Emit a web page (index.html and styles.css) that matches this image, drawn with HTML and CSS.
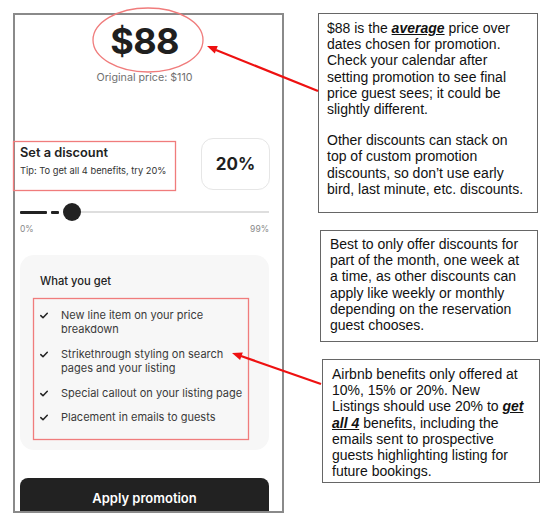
FILE: index.html
```html
<!DOCTYPE html>
<html lang="en">
<head>
<meta charset="utf-8">
<title>Promotion pricing notes</title>
<link rel="stylesheet" href="styles.css">
</head>
<body>
<div class="page">
  <div class="phone">
    <div class="price-block">
      <div class="price">$88</div>
      <div class="orig">Original price: $110</div>
    </div>
    <div class="discount-row">
      <div class="discount-text">
        <div class="discount-title">Set a discount</div>
        <div class="discount-tip">Tip: To get all 4 benefits, try 20%</div>
      </div>
      <div class="pct-box">20%</div>
    </div>
    <div class="slider">
      <span class="seg seg-long"></span>
      <span class="seg seg-short"></span>
      <span class="knob"></span>
      <span class="track"></span>
    </div>
    <div class="slider-labels"><span>0%</span><span>99%</span></div>
    <div class="benefits">
      <div class="benefits-title">What you get</div>
      <ul class="benefit-list">
        <li><svg class="check" viewBox="0 0 8 7"><path d="M0.8 3.6 L3 5.8 L7.3 1.2"/></svg><span>New line item on your price<br>breakdown</span></li>
        <li><svg class="check" viewBox="0 0 8 7"><path d="M0.8 3.6 L3 5.8 L7.3 1.2"/></svg><span>Strikethrough styling on search<br>pages and your listing</span></li>
        <li><svg class="check" viewBox="0 0 8 7"><path d="M0.8 3.6 L3 5.8 L7.3 1.2"/></svg><span>Special callout on your listing page</span></li>
        <li><svg class="check" viewBox="0 0 8 7"><path d="M0.8 3.6 L3 5.8 L7.3 1.2"/></svg><span>Placement in emails to guests</span></li>
      </ul>
    </div>
    <button class="apply">Apply promotion</button>
  </div>

  <div class="notes">
    <div class="note note-1">
      <p>$88 is the <em class="key">average</em> price over<br>dates chosen for promotion.<br>Check your calendar after<br>setting promotion to see final<br>price guest sees; it could be<br>slightly different.</p>
      <p>Other discounts can stack on<br>top of custom promotion<br>discounts, so don’t use early<br>bird, last minute, etc. discounts.</p>
    </div>
    <div class="note note-2">
      <p>Best to only offer discounts for<br>part of the month, one week at<br>a time, as other discounts can<br>apply like weekly or monthly<br>depending on the reservation<br>guest chooses.</p>
    </div>
    <div class="note note-3">
      <p>Airbnb benefits only offered at<br>10%, 15% or 20%. New<br>Listings should use 20% to <em class="key">get<br>all 4</em> benefits, including the<br>emails sent to prospective<br>guests highlighting listing for<br>future bookings.</p>
    </div>
  </div>

  <svg class="annotations" viewBox="0 0 555 518" width="555" height="518">
    <ellipse class="hl" cx="148" cy="40" rx="55" ry="32"/>
    <rect class="hl" x="13.5" y="141.5" width="162" height="49"/>
    <rect class="hl" x="33.5" y="298.5" width="215" height="141"/>
    <line class="arrow" x1="318" y1="91" x2="216" y2="50"/>
    <polygon class="arrow-head" points="207,46 217.8,46.1 214.8,53.5"/>
    <line class="arrow" x1="321" y1="384" x2="241" y2="356"/>
    <polygon class="arrow-head" points="232,353 242.8,352.5 240.1,360.1"/>
  </svg>
</div>
</body>
</html>
```

FILE: styles.css
```css
* {
  box-sizing: border-box;
}

html,
body {
  margin: 0;
  padding: 0;
  background: #ffffff;
}

.page {
  position: relative;
  width: 555px;
  height: 518px;
  padding: 13px 0 0 13px;
  display: flex;
  align-items: flex-start;
  font-family: Inter, "Noto Sans", sans-serif;
  color: #222222;
  overflow: hidden;
}

/* ---------- phone screenshot ---------- */
.phone {
  width: 271px;
  height: 500px;
  border: 2px solid #8a8a8a;
  padding: 6px 13px 0 5px;
  display: flex;
  flex-direction: column;
  overflow: hidden;
  background: #ffffff;
  flex-shrink: 0;
}

.phone > * {
  flex-shrink: 0;
}

.price-block {
  text-align: center;
}

.price {
  font-size: 36px;
  line-height: 40px;
  font-weight: 700;
  letter-spacing: -0.6px;
  color: #1f1f1f;
}

.orig {
  margin-top: 10px;
  font-size: 10.7px;
  line-height: 14px;
  color: #707070;
}

.discount-row {
  margin-top: 53px;
  display: flex;
  justify-content: space-between;
  align-items: flex-start;
}

.discount-text {
  margin-top: 6px;
}

.discount-title {
  font-size: 12.8px;
  line-height: 18px;
  font-weight: 600;
  color: #222222;
}

.discount-tip {
  margin-top: 3px;
  font-size: 9.3px;
  line-height: 12px;
  color: #333333;
}

.pct-box {
  width: 69px;
  height: 52px;
  margin-right: -1px;
  border: 1px solid #e6e6e6;
  border-radius: 12px;
  display: flex;
  align-items: center;
  justify-content: center;
  font-size: 17px;
  font-weight: 700;
  color: #1f1f1f;
}

.slider {
  margin-top: 13px;
  height: 18px;
  display: flex;
  align-items: center;
}

.seg {
  height: 3px;
  background: #222222;
  border-radius: 1px;
}

.seg-long {
  width: 27px;
}

.seg-short {
  width: 8px;
  margin-left: 4px;
}

.knob {
  width: 18px;
  height: 18px;
  margin-left: 4px;
  border-radius: 50%;
  background: #222222;
}

.track {
  flex: 1;
  height: 2px;
  background: #dedede;
}

.slider-labels {
  margin-top: 3px;
  display: flex;
  justify-content: space-between;
  font-size: 8.5px;
  line-height: 11px;
  color: #8a8a8a;
}

.benefits {
  margin-top: 20px;
  background: #f7f7f7;
  border-radius: 14px;
  padding: 19px 12px 25px 20px;
}

.benefits-title {
  font-size: 11.2px;
  line-height: 14px;
  font-weight: 500;
  color: #222222;
}

.benefit-list {
  list-style: none;
  margin: 19.5px 0 0;
  padding: 0;
  display: flex;
  flex-direction: column;
  gap: 10px;
}

.benefit-list li {
  display: flex;
  align-items: flex-start;
  font-size: 11px;
  line-height: 14.5px;
  color: #3a3a3a;
  white-space: nowrap;
}

.check {
  width: 8px;
  height: 7px;
  margin-top: 4px;
  margin-right: 13px;
  flex-shrink: 0;
  fill: none;
  stroke: #222222;
  stroke-width: 1.5;
  stroke-linecap: round;
  stroke-linejoin: round;
}

.apply {
  margin-top: 28px;
  width: 100%;
  height: 40px;
  border: none;
  border-radius: 8px;
  background: #222222;
  color: #ffffff;
  font-family: inherit;
  font-size: 13px;
  font-weight: 600;
  padding: 0;
}

/* ---------- note boxes ---------- */
.notes {
  margin-left: 34px;
  display: flex;
  flex-direction: column;
  font-family: "Liberation Sans", Arial, sans-serif;
  font-size: 14px;
  line-height: 16.2px;
  color: #111111;
}

.note {
  border: 1.5px solid #666666;
  padding: 5px 4px 0 8px;
  background: #ffffff;
}

.note p {
  margin: 0;
  white-space: nowrap;
}

.note p + p {
  margin-top: 15px;
}

.note-1 {
  width: 220px;
  height: 200px;
  padding-top: 6px;
}

.note-2 {
  width: 218px;
  height: 112px;
  margin-top: 17px;
  margin-left: 2px;
  padding-left: 9px;
}

.note-3 {
  width: 218px;
  height: 124px;
  margin-top: 17px;
  margin-left: 4px;
  padding-top: 6px;
  padding-left: 9px;
}

.key {
  font-weight: 700;
  font-style: italic;
  text-decoration: underline;
}

/* ---------- annotation overlay ---------- */
.annotations {
  position: absolute;
  left: 0;
  top: 0;
  pointer-events: none;
}

.hl {
  fill: none;
  stroke: #f07c7c;
  stroke-width: 1.3;
}

.arrow {
  stroke: #ee1111;
  stroke-width: 2.2;
}

.arrow-head {
  fill: #ee1111;
}
```
